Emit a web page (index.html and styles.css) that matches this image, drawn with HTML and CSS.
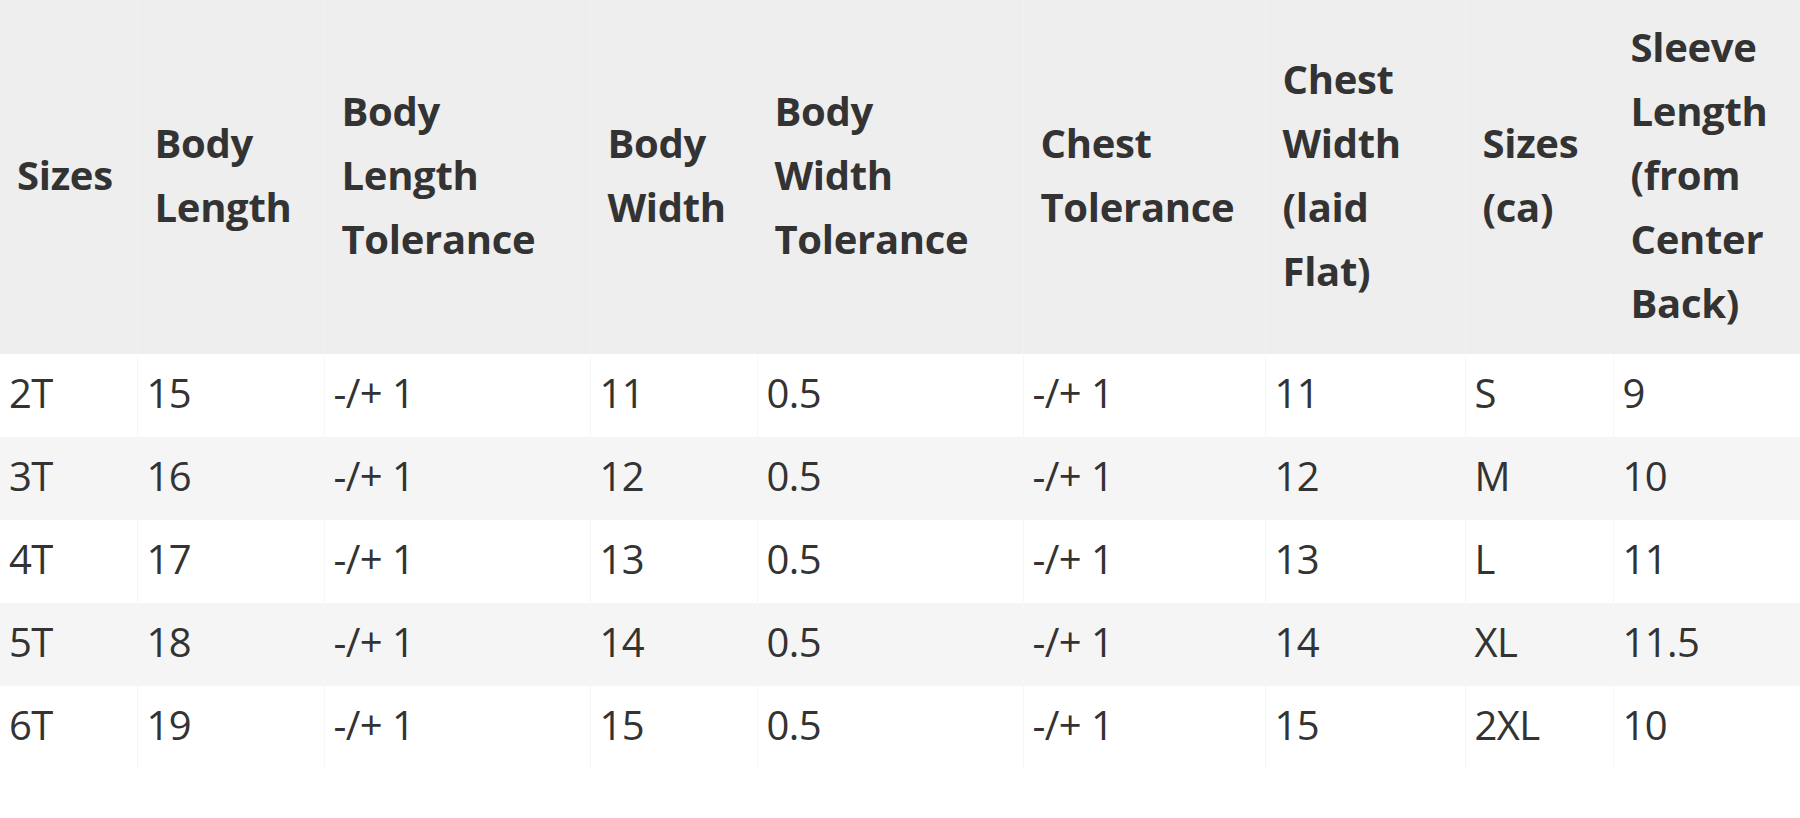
FILE: index.html
```html
<!DOCTYPE html>
<html lang="en">
<head>
<meta charset="utf-8">
<title>Size Chart</title>
<link rel="stylesheet" href="styles.css">
</head>
<body>
<table class="size-table">
  <colgroup>
    <col class="c1"><col class="c2"><col class="c3"><col class="c4"><col class="c5"><col class="c6"><col class="c7"><col class="c8"><col class="c9">
  </colgroup>
  <thead>
    <tr>
      <th>Sizes</th>
      <th>Body<br>Length</th>
      <th>Body<br>Length<br>Tolerance</th>
      <th>Body<br>Width</th>
      <th>Body<br>Width<br>Tolerance</th>
      <th>Chest<br>Tolerance</th>
      <th>Chest<br>Width<br>(laid<br>Flat)</th>
      <th>Sizes<br>(ca)</th>
      <th>Sleeve<br>Length<br>(from<br>Center<br>Back)</th>
    </tr>
  </thead>
  <tbody>
    <tr><td>2T</td><td>15</td><td>-/+ 1</td><td>11</td><td>0.5</td><td>-/+ 1</td><td>11</td><td>S</td><td>9</td></tr>
    <tr><td>3T</td><td>16</td><td>-/+ 1</td><td>12</td><td>0.5</td><td>-/+ 1</td><td>12</td><td>M</td><td>10</td></tr>
    <tr><td>4T</td><td>17</td><td>-/+ 1</td><td>13</td><td>0.5</td><td>-/+ 1</td><td>13</td><td>L</td><td>11</td></tr>
    <tr><td>5T</td><td>18</td><td>-/+ 1</td><td>14</td><td>0.5</td><td>-/+ 1</td><td>14</td><td>XL</td><td>11.5</td></tr>
    <tr><td>6T</td><td>19</td><td>-/+ 1</td><td>15</td><td>0.5</td><td>-/+ 1</td><td>15</td><td>2XL</td><td>10</td></tr>
  </tbody>
</table>
</body>
</html>
```
FILE: styles.css
```css
html, body {
  margin: 0;
  padding: 0;
  background: #ffffff;
}

body {
  font-family: "Open Sans", "Noto Sans", "Liberation Sans", sans-serif;
  color: #333333;
}

.size-table {
  width: 1800px;
  table-layout: fixed;
  border-collapse: collapse;
  border-spacing: 0;
}

.c1 { width: 137px; }
.c2 { width: 187px; }
.c3 { width: 266px; }
.c4 { width: 167px; }
.c5 { width: 266px; }
.c6 { width: 242px; }
.c7 { width: 200px; }
.c8 { width: 148px; }
.c9 { width: 187px; }

.size-table th {
  background: #eeeeee;
  font-weight: 700;
  font-size: 40px;
  letter-spacing: -0.3px;
  line-height: 64px;
  text-align: left;
  vertical-align: middle;
  padding: 15px 8px 19px 17px;
  border-right: 1px solid #f1f1f1;
}

.size-table td {
  font-weight: 400;
  font-size: 40px;
  letter-spacing: -0.6px;
  line-height: 64px;
  text-align: left;
  vertical-align: middle;
  padding: 7px 9px 12px 9px;
  border-right: 1px solid #f7f7f7;
}

.size-table tbody tr:nth-child(even) td {
  background: #f5f5f5;
}

.size-table th:last-child,
.size-table td:last-child {
  border-right: none;
}
```
